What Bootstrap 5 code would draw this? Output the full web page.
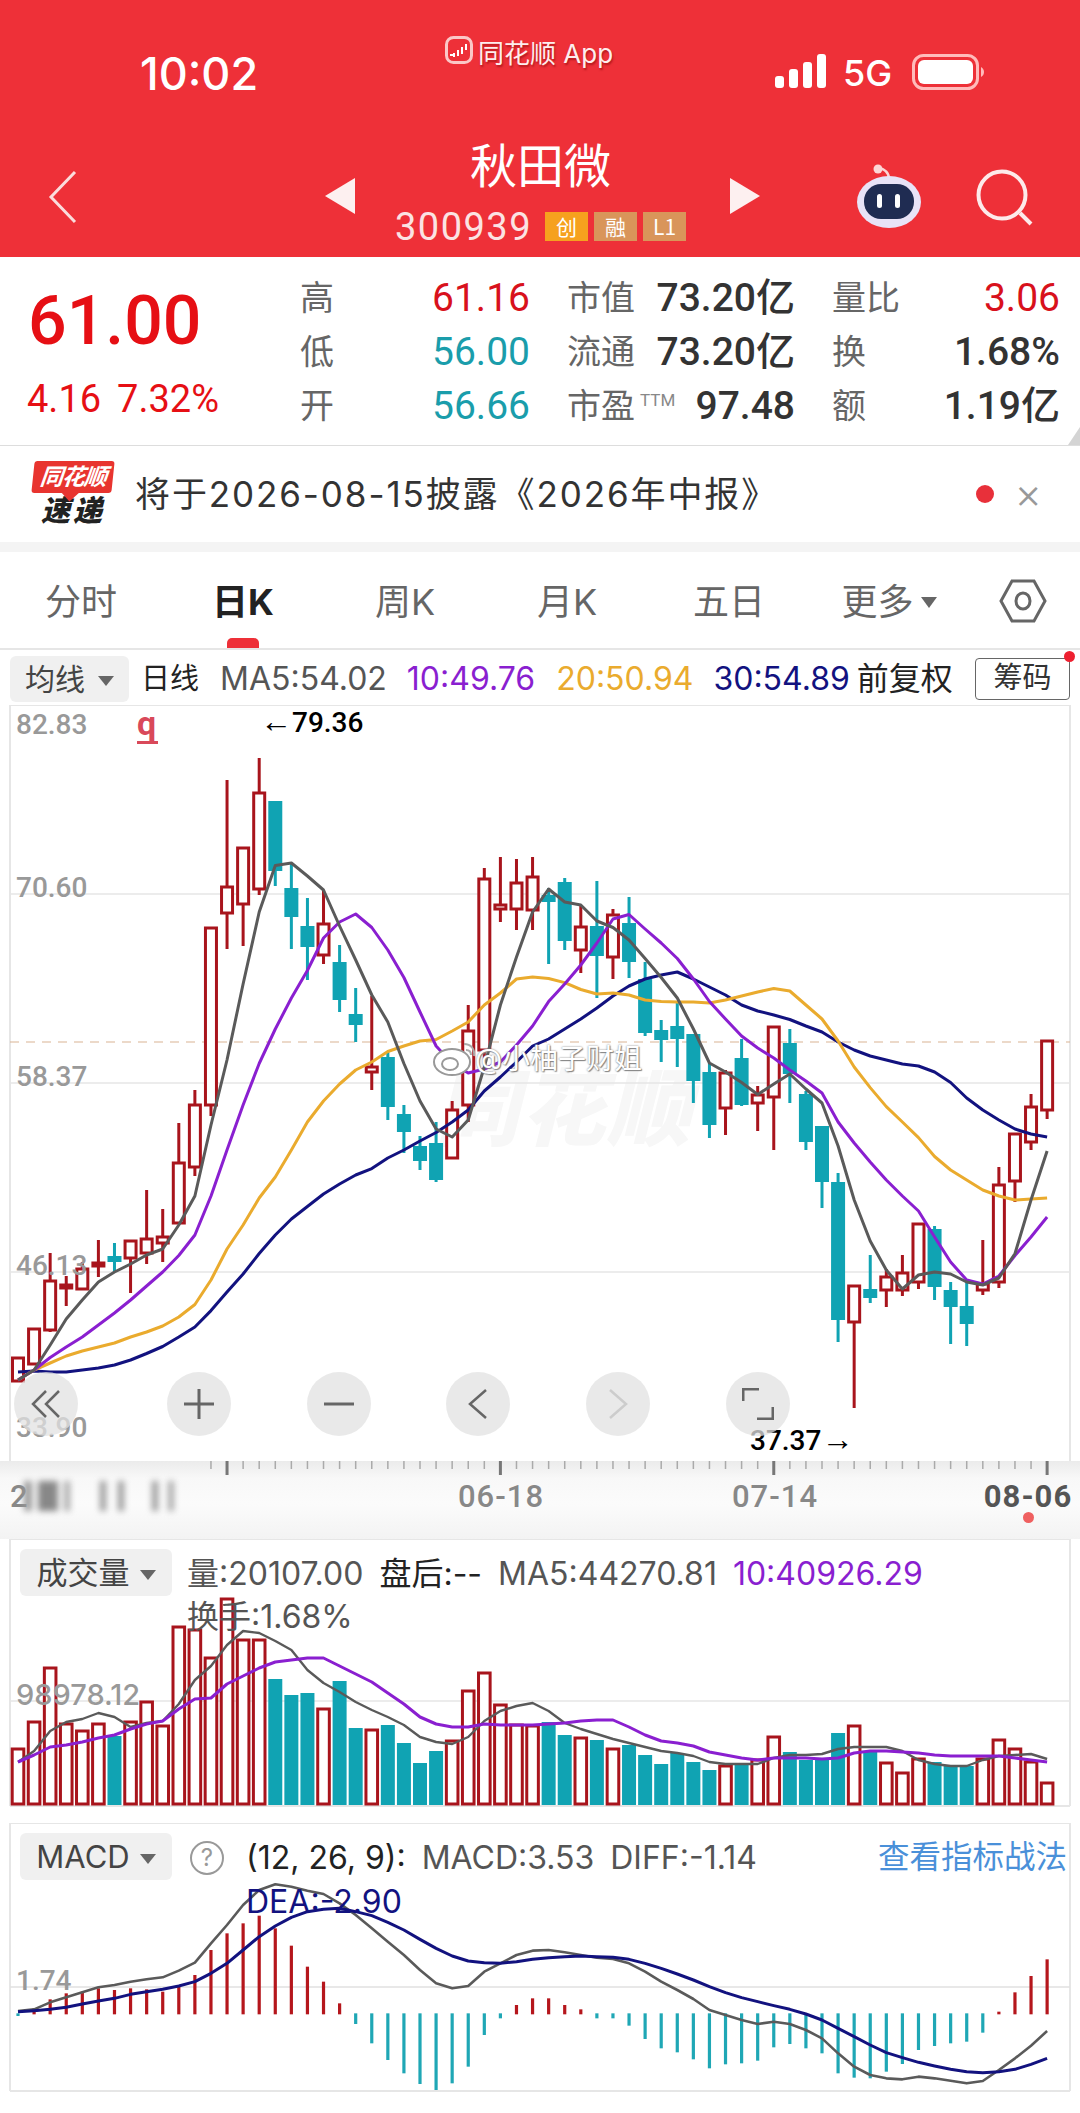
<!DOCTYPE html>
<html lang="zh-CN">
<head>
  <meta charset="UTF-8" />
  <meta name="viewport" content="width=device-width, initial-scale=1.0"/>
  <title>秋田微 300939</title>
  <link href="https://cdn.jsdelivr.net/npm/bootstrap@5.3.3/dist/css/bootstrap.min.css" rel="stylesheet">
  <style>
    body {
      background: #fff;
      font-family: Inter, "Noto Sans CJK SC", sans-serif;
      color: #333;
      width: 1080px;
      overflow-x: hidden;
    }
    /* red header */
    .top-red { background: #ee3038; height: 257px; color: #fff; }
    .status-row { height: 130px; }
    .clock { width: 445px; padding: 51px 0 0 140px; font-size: 45px; font-weight: 500; line-height: 46px; }
    .app-tag { width: 330px; padding-top: 36px; font-size: 26px; line-height: 36px; color: #fdeeee; text-shadow: 1px 2px 2px rgba(120,0,0,.5); }
    .app-logo { width: 28px; height: 28px; margin-right: 5px; }
    .sys-icons { padding-top: 54px; }
    .five-g { font-size: 36px; line-height: 38px; margin: 0 20px 0 16px; font-weight: 500; }
    .nav-row { height: 127px; }
    .back-zone { width: 325px; padding: 40px 0 0 48px; }
    .stock-mid { width: 375px; padding-right: 4px; }
    .stock-name { font-size: 47px; line-height: 56px; margin-top: 8px; }
    .stock-code { font-size: 38px; line-height: 40px; margin-top: 13px; letter-spacing: 1.5px; font-family: Roboto, sans-serif; color: #fbe3e3; }
    .tagm { display: inline-block; width: 43px; height: 29px; line-height: 29px; background: #d9955a; color: #fff; font-size: 21px; text-align: center; margin-left: 6px; letter-spacing: 0; font-family: "Noto Sans CJK SC", sans-serif; vertical-align: 5px; }
    .tagm-a { background: #f6a11e; margin-left: 13px; }
    .arrow-l, .arrow-r { margin-top: 48px; width: 30px; height: 36px; }
    .right-zone { padding: 34px 0 0 96px; }
    .robot { width: 66px; height: 64px; margin-right: 54px; }
    .zoom-glass { width: 58px; height: 58px; margin-top: 5px; }

    /* quote */
    .quote-box { height: 189px; border-bottom: 1px solid #ddd; font-family: Roboto, "Noto Sans CJK SC", sans-serif; }
    .quote-corner { right: 0; bottom: 0; border-left: 12px solid transparent; border-bottom: 18px solid #d4d4d4; width: 0; height: 0; }
    .price-col { width: 300px; padding-left: 28px; color: #e60f14; }
    .price-big { font-size: 68px; font-weight: 500; line-height: 80px; margin-top: 24px; }
    .price-chg { font-size: 38px; line-height: 40px; margin-top: 18px; white-space: nowrap; margin-left: -1px; }
    .price-chg span + span { margin-left: 16px; }
    .q-col { padding-top: 14px; font-size: 39px; }
    .q-a { width: 230px; margin-right: 37px; }
    .q-b { width: 228px; margin-right: 37px; }
    .q-c { width: 228px; }
    .q-line { height: 54px; line-height: 54px; white-space: nowrap; }
    .q-lab { font-size: 34px; color: #666; }
    .q-ttm { font-size: 17px; position: relative; top: -12px; margin-left: 5px; color: #888; }
    .v-red { color: #d8111c; }
    .v-teal { color: #1a9dab; }
    .v-dark { color: #333; font-weight: 500; }

    /* notice */
    .notice-box { height: 106px; padding: 15px 38px 0 33px; border-bottom: 10px solid #f4f4f4; }
    .ad-logo { width: 80px; height: 68px; margin-right: 22px; }
    .ad-top { background: #e8342f; color: #fff; font-size: 23px; line-height: 32px; font-weight: 700; font-style: italic; text-align: center; border-radius: 3px; transform: skewX(-6deg); letter-spacing: -1px; position: relative; }
    .ad-top::after { content: ""; position: absolute; left: 33px; bottom: -6px; width: 12px; height: 12px; background: #e8342f; transform: rotate(45deg); z-index: -1; }
    .ad-bot { font-size: 29px; line-height: 35px; font-weight: 900; font-style: italic; text-align: center; color: #222; letter-spacing: 3px; }
    .notice-text { font-size: 35px; line-height: 66px; color: #333; white-space: nowrap; letter-spacing: 1.9px; }
    .notice-dot { width: 18px; height: 18px; border-radius: 50%; background: #e8303a; margin: 24px 21px 0 auto; }
    .notice-x { font-size: 42px; line-height: 64px; color: #999; font-weight: 300; }

    /* tabs */
    .tab-row { height: 98px; border-bottom: 2px solid #e6e6e6; font-size: 36px; color: #666; }
    .tab-cell { width: 162px; text-align: center; line-height: 100px; white-space: nowrap; }
    .tab-on { color: #222; font-weight: 700; }
    .tab-on::after { content: ""; position: absolute; left: 65px; bottom: 0; width: 32px; height: 10px; border-radius: 5px 5px 0 0; background: #ee3038; }
    .tab-more { padding-right: 4px; }
    .tab-tri { display: inline-block; width: 0; height: 0; border-left: 8px solid transparent; border-right: 8px solid transparent; border-top: 11px solid #666; vertical-align: 7px; margin-left: 7px; }
    .tab-gear { width: 108px; padding: 19px 0 0 27px; }

    /* legend row above candles */
    .legend-row { height: 55px; padding: 3px 10px 0 10px; font-size: 32px; white-space: nowrap; }
    .drop-btn { background: #f0f0f0; border-radius: 6px; height: 46px; line-height: 46px; padding: 0 15px; color: #444; font-size: 30px; }
    .drop-btn i { display: inline-block; width: 0; height: 0; border-left: 8px solid transparent; border-right: 8px solid transparent; border-top: 10px solid #666; margin-left: 13px; vertical-align: 4px; }
    .c-ma5 { color: #555; }
    .c-ma10 { color: #8a1fd0; }
    .c-ma20 { color: #eaab2e; }
    .c-ma30 { color: #12127f; }
    .c-blk { color: #222; }
    .chip-btn { border: 1.5px solid #666; border-radius: 4px; width: 95px; height: 42px; line-height: 38px; text-align: center; margin-left: auto; color: #333; font-size: 29px; }
    .chip-dot { right: 5px; top: 1px; width: 11px; height: 11px; border-radius: 50%; background: #ee2030; }
    .leg-1 { margin-left: 12px; font-size: 29px; }
    .leg-2 { margin-left: 21px; }
    .leg-3 { margin-left: 20px; }
    .leg-4 { margin-left: 21px; }
    .leg-5 { margin-left: 20px; }
    .leg-6 { margin-left: 7px; }

    /* chart panels */
    .chart-box { height: 756px; }
    .over { position: absolute; white-space: nowrap; }
    .panel-svg { display: block; position: absolute; left: 0; top: 0; }
    .scale-lab { left: 16px; font-size: 28px; line-height: 34px; color: #999; font-family: Roboto, sans-serif; font-weight: 500; }
    .sc-1 { top: 3px; }
    .sc-2 { top: 166px; }
    .sc-3 { top: 355px; }
    .sc-4 { top: 544px; }
    .sc-5 { top: 706px; }
    .hi-lab { left: 260px; top: 0; font-size: 28px; line-height: 36px; color: #000; font-family: Roboto, sans-serif; font-weight: 500; }
    .lo-lab { left: 750px; top: 718px; font-size: 28px; line-height: 36px; color: #000; font-family: Roboto, sans-serif; font-weight: 500; }
    .thin-arrow { font-family: "Liberation Sans", sans-serif; font-weight: 400; font-size: 32px; line-height: 0; }
    .q-mark { left: 137px; top: 4px; color: #d9495a; font-size: 34px; line-height: 28px; font-weight: 700; font-family: Roboto, sans-serif; }
    .q-arrow { display: block; width: 21px; height: 3px; background: #d9495a; margin-top: 4px; }
    .wm-big { left: 435px; top: 366px; font-size: 84px; line-height: 76px; font-weight: 900; font-style: italic; color: #f7f7f7; letter-spacing: 2px; }
    .wm-name { left: 475px; top: 342px; font-size: 28px; line-height: 24px; color: #fff; text-shadow: 0 0 2px #777, 1px 1px 1px #888; }
    .wm-bird { left: 432px; top: 333px; width: 50px; height: 40px; }
    .round-btn { top: 667px; width: 64px; height: 64px; border-radius: 50%; background: rgba(225,225,225,.75); padding: 0; border: 0; }
    .round-btn svg { display: block; margin: 16px; }
    .rb-1 { left: 14px; }
    .rb-2 { left: 167px; }
    .rb-3 { left: 307px; }
    .rb-4 { left: 446px; }
    .rb-5 { left: 586px; }
    .rb-6 { left: 726px; }

    /* date axis */
    .date-band { height: 78px; background: linear-gradient(#ebebeb, #f8f8f8 22%, #fbfbfb 55%, #f3f3f3); font-family: Roboto, sans-serif; font-weight: 500; font-size: 31px; color: #888; }
    .date-lab { top: 18px; line-height: 36px; letter-spacing: 1px; transform: translateX(-50%); }
    .d-1 { left: 501px; }
    .d-2 { left: 775px; }
    .d-3 { left: 1028px; color: #555; font-weight: 700; }
    .date-dot { left: 1023px; top: 51px; width: 11px; height: 11px; border-radius: 50%; background: #ef6060; }
    .blur-left { left: 10px; top: 18px; width: 170px; height: 36px; color: #888; line-height: 36px; overflow: hidden; }
    .blur-bars { left: 24px; top: 20px; width: 160px; height: 30px; filter: blur(3px);
      background: linear-gradient(90deg, #999 0 8px, transparent 8px 14px, #888 14px 34px, transparent 34px 40px, #aaa 40px 46px, transparent 46px 76px, #999 76px 82px, transparent 82px 94px, #999 94px 100px, transparent 100px 128px, #999 128px 134px, transparent 134px 144px, #aaa 144px 150px, transparent 150px); }

    /* lower panels */
    .vol-box, .macd-box { height: 270px; }
    .macd-box { margin-top: 14px; }
    .sub-btn { left: 20px; top: 10px; width: 152px; height: 47px; line-height: 47px; background: #f0f0f0; border-radius: 6px; text-align: center; font-size: 31px; color: #444; }
    .sub-btn i { display: inline-block; width: 0; height: 0; border-left: 8px solid transparent; border-right: 8px solid transparent; border-top: 10px solid #666; margin-left: 10px; vertical-align: 4px; }
    .vol-leg { left: 187px; top: 16px; font-size: 32px; line-height: 38px; color: #555; }
    .vol-leg span { margin-right: 16px; }
    .vol-turn { left: 187px; top: 60px; font-size: 32px; line-height: 36px; color: #555; }
    .vol-scale { left: 16px; top: 139px; font-size: 29px; line-height: 34px; color: #999; font-weight: 500; font-family: Inter, sans-serif; }
    .macd-q { left: 190px; top: 18px; width: 34px; height: 34px; border: 2px solid #999; border-radius: 50%; text-align: center; line-height: 30px; font-size: 24px; color: #999; }
    .macd-leg { left: 246px; top: 16px; font-size: 32px; line-height: 38px; color: #555; }
    .macd-leg span { margin-right: 16px; }
    .macd-link { right: 13px; top: 14px; font-size: 31.5px; line-height: 40px; color: #4a90d9; }
    .macd-dea { left: 246px; top: 61px; font-size: 32px; line-height: 36px; color: #12127f; }
    .macd-scale { left: 16px; top: 141px; font-size: 28px; line-height: 34px; color: #999; font-family: Roboto, sans-serif; font-weight: 500; }
  </style>
</head>
<body class="m-0">

  <!-- red header -->
  <div class="top-red">
    <div class="status-row d-flex">
      <div class="clock">10:02</div>
      <div class="app-tag d-flex align-items-start">
        <svg class="app-logo" viewBox="0 0 28 28"><rect x="1.5" y="1.5" width="25" height="25" rx="7" fill="#ee3038" stroke="#fbc7c7" stroke-width="3"/><path d="M5 19h4M9 17v4M13 14v6M17 11v7M21 8v6" stroke="#fff" stroke-width="2"/></svg>
        <span>同花顺 App</span>
      </div>
      <div class="sys-icons d-flex align-items-start">
        <svg width="52" height="34" viewBox="0 0 52 34"><rect x="0" y="22" width="9" height="12" rx="3" fill="#fff"/><rect x="14" y="15" width="9" height="19" rx="3" fill="#fff"/><rect x="28" y="8" width="9" height="26" rx="3" fill="#fff"/><rect x="42" y="0" width="9" height="34" rx="3" fill="#fff"/></svg>
        <div class="five-g">5G</div>
        <svg width="72" height="36" viewBox="0 0 72 36"><rect x="1.5" y="1.5" width="64" height="33" rx="10" fill="none" stroke="#fbb" stroke-width="3"/><rect x="6" y="6" width="55" height="24" rx="6" fill="#fff"/><path d="M69 13c2 1 3 3 3 5s-1 4-3 5z" fill="#fbb"/></svg>
      </div>
    </div>
    <div class="nav-row d-flex">
      <div class="back-zone">
        <svg width="30" height="54" viewBox="0 0 30 54"><path d="M27 2 3 27l24 25" fill="none" stroke="#fbdcdc" stroke-width="3"/></svg>
      </div>
      <svg class="arrow-l" viewBox="0 0 30 36"><path d="M30 0v36L0 18z" fill="#fdf0f0"/></svg>
      <div class="stock-mid text-center">
        <div class="stock-name">秋田微</div>
        <div class="stock-code">300939<span class="tagm tagm-a">创</span><span class="tagm">融</span><span class="tagm">L1</span></div>
      </div>
      <svg class="arrow-r" viewBox="0 0 30 36"><path d="M0 0v36l30-18z" fill="#fdf0f0"/></svg>
      <div class="right-zone d-flex align-items-start">
        <svg class="robot" viewBox="0 0 66 64"><path d="M33 15c0-6-4-10-10-11" fill="none" stroke="#fbd5d5" stroke-width="2.5"/><circle cx="22" cy="5" r="4.5" fill="#fcd6d6"/><ellipse cx="33" cy="38" rx="32" ry="26" fill="#e8e3f7"/><rect x="8" y="20" width="50" height="35" rx="17" fill="#1f2c52"/><rect x="21" y="30" width="5" height="14" rx="2.5" fill="#fff"/><rect x="39" y="30" width="5" height="14" rx="2.5" fill="#fff"/></svg>
        <svg class="zoom-glass" viewBox="0 0 58 58"><circle cx="26" cy="26" r="23.5" fill="none" stroke="#fdeaea" stroke-width="4"/><path d="M44 44l11 11" stroke="#fdeaea" stroke-width="4"/></svg>
      </div>
    </div>
  </div>

  <!-- quote -->
  <div class="quote-box d-flex position-relative">
    <div class="price-col">
      <div class="price-big">61.00</div>
      <div class="price-chg"><span>4.16</span><span>7.32%</span></div>
    </div>
    <div class="q-col q-a">
      <div class="q-line d-flex justify-content-between"><span class="q-lab">高</span><span class="v-red">61.16</span></div>
      <div class="q-line d-flex justify-content-between"><span class="q-lab">低</span><span class="v-teal">56.00</span></div>
      <div class="q-line d-flex justify-content-between"><span class="q-lab">开</span><span class="v-teal">56.66</span></div>
    </div>
    <div class="q-col q-b">
      <div class="q-line d-flex justify-content-between"><span class="q-lab">市值</span><span class="v-dark">73.20亿</span></div>
      <div class="q-line d-flex justify-content-between"><span class="q-lab">流通</span><span class="v-dark">73.20亿</span></div>
      <div class="q-line d-flex justify-content-between"><span class="q-lab">市盈<span class="q-ttm">TTM</span></span><span class="v-dark">97.48</span></div>
    </div>
    <div class="q-col q-c">
      <div class="q-line d-flex justify-content-between"><span class="q-lab">量比</span><span class="v-red">3.06</span></div>
      <div class="q-line d-flex justify-content-between"><span class="q-lab">换</span><span class="v-dark">1.68%</span></div>
      <div class="q-line d-flex justify-content-between"><span class="q-lab">额</span><span class="v-dark">1.19亿</span></div>
    </div>
    <div class="quote-corner position-absolute"></div>
  </div>

  <!-- notice -->
  <div class="notice-box d-flex">
    <div class="ad-logo">
      <div class="ad-top">同花顺</div>
      <div class="ad-bot">速递</div>
    </div>
    <div class="notice-text">将于2026-08-15披露《2026年中报》</div>
    <div class="notice-dot"></div>
    <div class="notice-x">×</div>
  </div>

  <!-- tabs -->
  <div class="tab-row d-flex">
    <div class="tab-cell">分时</div>
    <div class="tab-cell tab-on position-relative">日K</div>
    <div class="tab-cell">周K</div>
    <div class="tab-cell">月K</div>
    <div class="tab-cell">五日</div>
    <div class="tab-cell tab-more">更多<span class="tab-tri"></span></div>
    <div class="tab-gear">
      <svg width="48" height="44" viewBox="0 0 48 44"><path d="M13 2h22l11 20-11 20H13L2 22z" fill="none" stroke="#666" stroke-width="3"/><ellipse cx="24" cy="22" rx="7" ry="8" fill="none" stroke="#666" stroke-width="3"/></svg>
    </div>
  </div>

  <!-- legend -->
  <div class="legend-row d-flex align-items-center position-relative">
    <div class="drop-btn">均线<i></i></div>
    <span class="c-blk leg-1">日线</span>
    <span class="c-ma5 leg-2">MA5:54.02</span>
    <span class="c-ma10 leg-3">10:49.76</span>
    <span class="c-ma20 leg-4">20:50.94</span>
    <span class="c-ma30 leg-5">30:54.89</span>
    <span class="c-blk leg-6">前复权</span>
    <div class="chip-btn">筹码</div>
    <div class="chip-dot position-absolute"></div>
  </div>

  <!-- candles -->
  <div class="chart-box position-relative">
    <span class="over wm-big">同花顺</span>
    <svg id="priceSvg" class="panel-svg" width="1080" height="756" viewBox="0 705 1080 756"></svg>
    <span class="over scale-lab sc-1">82.83</span>
    <span class="over scale-lab sc-2">70.60</span>
    <span class="over scale-lab sc-3">58.37</span>
    <span class="over scale-lab sc-4">46.13</span>
    <span class="over scale-lab sc-5">33.90</span>
    <span class="over q-mark">q<i class="q-arrow"></i></span>
    <span class="over hi-lab"><span class="thin-arrow">←</span>79.36</span>
    <span class="over lo-lab">37.37<span class="thin-arrow">→</span></span>
    <svg class="over wm-bird" viewBox="0 0 50 40"><ellipse cx="20" cy="24" rx="18" ry="13" fill="#fff" stroke="#999" stroke-width="2"/><ellipse cx="18" cy="26" rx="8" ry="6" fill="none" stroke="#999" stroke-width="2"/><path d="M32 6c7 0 11 5 10 12M34 12c3 0 5 2 5 5" fill="none" stroke="#aaa" stroke-width="2"/></svg>
    <span class="over wm-name">@小柚子财姐</span>
    <button class="over round-btn rb-1" type="button"><svg width="32" height="32" viewBox="0 0 32 32"><path d="M16 3 3 16l13 13M29 3 16 16l13 13" fill="none" stroke="#666" stroke-width="2.5"/></svg></button>
    <button class="over round-btn rb-2" type="button"><svg width="32" height="32" viewBox="0 0 32 32"><path d="M1 16h30M16 1v30" fill="none" stroke="#666" stroke-width="3"/></svg></button>
    <button class="over round-btn rb-3" type="button"><svg width="32" height="32" viewBox="0 0 32 32"><path d="M1 16h30" fill="none" stroke="#666" stroke-width="3"/></svg></button>
    <button class="over round-btn rb-4" type="button"><svg width="32" height="32" viewBox="0 0 32 32"><path d="M24 2 8 16l16 14" fill="none" stroke="#666" stroke-width="2.5"/></svg></button>
    <button class="over round-btn rb-5" type="button"><svg width="32" height="32" viewBox="0 0 32 32"><path d="M8 2l16 14L8 30" fill="none" stroke="#ccc" stroke-width="2.5"/></svg></button>
    <button class="over round-btn rb-6" type="button"><svg width="32" height="32" viewBox="0 0 32 32"><path d="M1 13V1h16M31 19v12H15" fill="none" stroke="#666" stroke-width="3"/></svg></button>
  </div>

  <!-- date axis -->
  <div class="date-band position-relative">
    <svg id="tickSvg" class="panel-svg" width="1080" height="20"></svg>
    <div class="over blur-left">2</div>
    <div class="over blur-bars"></div>
    <span class="over date-lab d-1">06-18</span>
    <span class="over date-lab d-2">07-14</span>
    <span class="over date-lab d-3">08-06</span>
    <span class="over date-dot"></span>
  </div>

  <!-- volume -->
  <div class="vol-box position-relative">
    <svg id="volSvg" class="panel-svg" width="1080" height="270" viewBox="0 1539 1080 270"></svg>
    <div class="over sub-btn">成交量<i></i></div>
    <div class="over vol-leg"><span>量:20107.00</span><span class="c-blk">盘后:--</span><span>MA5:44270.81</span><span class="c-ma10">10:40926.29</span></div>
    <div class="over vol-turn">换手:1.68%</div>
    <span class="over vol-scale">98978.12</span>
  </div>

  <!-- macd -->
  <div class="macd-box position-relative">
    <svg id="macdSvg" class="panel-svg" width="1080" height="270" viewBox="0 1823 1080 270"></svg>
    <div class="over sub-btn">MACD<i></i></div>
    <div class="over macd-q">?</div>
    <div class="over macd-leg"><span class="c-blk">(12, 26, 9):</span><span>MACD:3.53</span><span>DIFF:-1.14</span></div>
    <div class="over macd-link">查看指标战法</div>
    <div class="over macd-dea">DEA:-2.90</div>
    <span class="over macd-scale">1.74</span>
  </div>

  <script src="https://cdn.jsdelivr.net/npm/bootstrap@5.3.3/dist/js/bootstrap.bundle.min.js"></script>
  <script>
    const RED = '#a8141c', TEAL = '#10a3b3';
    const X = i => 18 + 16.08 * i;

    // wickTop, bodyTop, bodyBottom, wickBottom, colour (page pixels)
    const candles = [
      [1358,1358,1381,1381,'r'],[1329,1329,1364,1364,'r'],[1253,1281,1330,1332,'r'],[1276,1285,1288,1306,'r'],[1262,1269,1289,1289,'r'],
      [1240,1263,1266,1277,'r'],[1243,1256,1262,1272,'t'],[1241,1241,1258,1293,'r'],[1190,1239,1253,1264,'r'],[1209,1237,1243,1262,'r'],
      [1123,1163,1223,1223,'r'],[1090,1105,1167,1176,'r'],[928,928,1105,1116,'r'],[780,887,913,949,'r'],[848,848,904,946,'r'],
      [758,793,889,895,'r'],[801,801,871,886,'t'],[864,888,917,949,'t'],[898,926,947,980,'t'],[890,924,955,964,'r'],
      [945,962,1000,1012,'t'],[988,1014,1025,1042,'t'],[996,1067,1072,1090,'r'],[1051,1057,1107,1120,'t'],[1105,1114,1132,1153,'t'],
      [1136,1146,1161,1170,'t'],[1122,1143,1180,1182,'t'],[1101,1110,1158,1158,'r'],[1005,1031,1105,1122,'r'],[868,879,1050,1060,'r'],
      [857,905,909,922,'r'],[859,883,909,930,'r'],[857,877,910,930,'r'],[888,895,902,964,'t'],[878,882,941,950,'t'],
      [905,927,950,973,'r'],[881,926,956,998,'t'],[909,915,957,979,'r'],[897,923,962,978,'t'],[962,979,1033,1036,'t'],
      [1020,1030,1040,1062,'t'],[1003,1026,1039,1067,'t'],[1034,1034,1081,1103,'t'],[1063,1072,1125,1138,'t'],[1070,1073,1108,1135,'r'],
      [1039,1058,1105,1106,'t'],[1086,1095,1103,1131,'r'],[1027,1027,1097,1150,'r'],[1029,1043,1074,1103,'t'],[1091,1094,1142,1150,'t'],
      [1126,1126,1182,1208,'t'],[1173,1182,1320,1342,'t'],[1286,1286,1322,1408,'r'],[1255,1289,1298,1303,'t'],[1269,1277,1290,1307,'r'],
      [1255,1273,1290,1296,'r'],[1223,1224,1282,1289,'r'],[1226,1229,1287,1300,'t'],[1282,1290,1307,1344,'t'],[1282,1306,1324,1346,'t'],
      [1240,1284,1290,1295,'r'],[1167,1185,1282,1288,'r'],[1134,1134,1181,1202,'r'],[1094,1107,1142,1150,'r'],[1040,1041,1110,1119,'r']
    ];
    const ma5 = [1380,1370,1345,1319,1300,1282,1272,1264,1255,1249,1225,1196,1125,1060,984,912,865.5,863,876,890,926,960,995,1022,1063.5,1101,1129,1137,1120,1067,1005,957,912,889,902,905,921,927.5,940,958.5,977.5,998,1029,1063,1072,1082.5,1094.5,1084,1074,1089,1103,1146,1200,1241,1270,1289,1275,1272,1274,1282,1285,1278,1253.5,1200,1151];
    const ma10 = [1380,1370,1357.5,1347,1337,1325,1313,1300,1286,1272,1255.5,1235,1196,1150,1105,1063.5,1029,998,970.5,938,922,914,927.5,950,977.5,1012,1046,1063.5,1073,1069,1062,1045,1026,1001.6,984,965,943,919,914.5,929,943,958.5,979,1001.5,1019,1036,1048,1058,1070,1081,1093,1122,1143,1162,1180,1196,1211,1237,1262,1280,1284,1276,1255.5,1237,1217];
    const ma20 = [1380,1370,1363,1356,1351,1347,1343,1337,1332,1326,1317,1304.5,1280,1249,1225,1198,1177,1150,1122,1101,1084,1070,1062,1051.5,1046,1041,1039.5,1031,1022,1005,993,979,977,978.5,982.6,989.5,994,993,995,1000,1001.6,1002,1002,1003,1000,996,992,988.5,991,1005,1019,1041,1067,1087.6,1106.6,1122,1137.6,1156.5,1170,1180,1190,1196,1200,1199,1198];
    const ma30 = [1372,1371,1372,1372,1370,1368,1365,1360,1353.5,1346.5,1337,1327,1310.6,1292,1274,1253.5,1235,1219,1206.5,1194,1184,1175,1168.6,1158,1150,1141,1132.5,1122,1110,1091,1077,1062,1046,1039,1029,1019,1008,996,986,979,975,972,979,987,995,1005,1011,1015,1019.5,1026,1032,1042,1050,1056,1060,1064,1066,1072,1082.5,1098,1110,1120,1129,1134,1137];

    const vols = [1749,1722,1668,1724,1731,1724,1736,1722,1702,1726,1627,1630,1658,1599,1640,1640,1679,1695,1693,1709,1681,1728,1730,1725,1743,1763,1751,1741,1691,1673,1705,1725,1726,1722,1735,1738,1740,1749,1745,1755,1764,1753,1762,1770,1766,1764,1760,1737,1752,1760,1760,1733,1726,1752,1763,1773,1759,1762,1766,1766,1759,1740,1749,1762,1783];
    const volMa5 = [1762,1751,1731,1722,1719,1713,1717,1727,1723,1721,1704,1680,1666,1645,1631,1633,1641,1650,1670,1683,1692,1702,1710,1717,1725,1737,1742,1744,1737,1721,1711,1706,1703,1711,1723,1729,1734,1739,1743,1747,1751,1753,1756,1762,1764,1764,1764,1758,1755,1755,1754,1749,1747,1747,1747,1751,1760,1764,1766,1766,1760,1756,1755,1754,1759];
    const volMa10 = [1762,1755,1747,1745,1742,1738,1735,1729,1724,1721,1709,1699,1698,1684,1676,1668,1662,1660,1658,1658,1666,1674,1682,1693,1704,1717,1724,1727,1727,1724,1725,1725,1725,1724,1723,1721,1720,1720,1727,1735,1741,1743,1746,1752,1755,1758,1760,1758,1758,1758,1759,1758,1753,1751,1751,1752,1753,1755,1756,1756,1756,1756,1758,1760,1762];

    // macd values read off the panel: bar tips and both lines, in panel units (3 = 1px)
    const macdBars = [648,625,598,580,575,565,570,565,568,575,555,525,450,400,370,347,385,437,500,545,610,672,730,780,820,852,870,850,800,705,655,615,595,595,615,628,655,655,677,717,745,757,778,805,793,790,782,742,732,745,760,820,833,835,815,792,750,738,730,725,698,635,577,528,478];
    const diff = [633,628,607,592,577,562,555,545,538,532,512,488,430,375,315,270,253,260,272,282,310,345,385,425,465,510,550,565,558,515,490,465,452,450,457,465,473,477,490,515,545,570,597,630,645,660,672,665,672,690,715,760,800,825,835,838,830,835,842,850,843,810,775,737,693];
    const dea = [635,632,628,622,612,603,595,583,575,568,558,545,520,490,450,410,378,352,335,328,325,335,347,367,390,418,445,468,483,488,490,485,478,473,470,468,470,472,478,490,505,522,540,560,578,593,605,617,628,642,660,685,710,735,758,773,787,798,808,815,818,815,808,793,775];

    const line = (ys, color, w) =>
      `<polyline fill="none" stroke="${color}" stroke-width="${w}" stroke-linejoin="round" points="${ys.map((y, i) => X(i).toFixed(1) + ',' + y).join(' ')}"/>`;

    // price panel
    let s = '';
    s += '<path d="M10 705V1461M1070 705V1461M10 705H1070" stroke="#e6e6e6" stroke-width="2" fill="none"/>';
    [894, 1083, 1272].forEach(y => { s += `<path d="M10 ${y}H1070" stroke="#e6e6e6" stroke-width="1.5"/>`; });
    s += '<path d="M10 1042H1070" stroke="#d9b394" stroke-width="1.2" stroke-dasharray="9 7"/>';
    candles.forEach((c, i) => {
      const x = X(i), col = c[4] === 'r' ? RED : TEAL;
      s += `<path d="M${x} ${c[0]}V${c[1]}M${x} ${c[2]}V${c[3]}" stroke="${col}" stroke-width="3"/>`;
      if (c[4] === 'r') s += `<rect x="${x - 5.5}" y="${c[1]}" width="11" height="${c[2] - c[1]}" fill="#fff" stroke="${col}" stroke-width="3"/>`;
      else s += `<rect x="${x - 7}" y="${c[1]}" width="14" height="${c[2] - c[1]}" fill="${col}"/>`;
    });
    s += line(ma30, '#12127f', 3) + line(ma20, '#eaab2e', 3) + line(ma10, '#8a1fd0', 3) + line(ma5, '#5a5a5a', 3);
    document.getElementById('priceSvg').innerHTML = s;

    // ticks under the price panel
    let t = '';
    for (let i = 12; i < 65; i++) {
      const big = (i - 13) % 17 === 0;
      t += `<rect x="${X(i) - (big ? 1.5 : .75)}" y="0" width="${big ? 3 : 1.5}" height="${big ? 14 : 8}" fill="${big ? '#777' : '#aaa'}"/>`;
    }
    document.getElementById('tickSvg').innerHTML = t;

    // volume panel
    let v = '';
    v += '<path d="M10 1539V1806M1070 1539V1806M10 1539H1070M10 1806H1070" stroke="#e6e6e6" stroke-width="2" fill="none"/>';
    v += '<path d="M10 1701H1070" stroke="#e6e6e6" stroke-width="1.5"/>';
    vols.forEach((top, i) => {
      const x = X(i), bottom = 1804;
      if (candles[i][4] === 'r') v += `<rect x="${x - 5.8}" y="${top}" width="11.6" height="${bottom - top}" fill="#fff" stroke="${RED}" stroke-width="3"/>`;
      else v += `<rect x="${x - 7}" y="${top}" width="14" height="${bottom - top + 1}" fill="${TEAL}"/>`;
    });
    v += line(volMa5, '#5a5a5a', 2.4) + line(volMa10, '#8a1fd0', 3);
    document.getElementById('volSvg').innerHTML = v;

    // macd panel
    const mY = z => 1800 + z / 3;
    let m = '';
    m += '<path d="M10 1823V2091M1070 1823V2091M10 1823H1070M10 2091H1070" stroke="#e6e6e6" stroke-width="2" fill="none"/>';
    m += '<path d="M10 1987H1070" stroke="#e0e0e0" stroke-width="1.5"/>';
    macdBars.forEach((z, i) => {
      const red = z < 640;
      m += `<path d="M${X(i)} ${mY(red ? 643 : 640)}V${mY(z)}" stroke="${red ? '#b5161c' : '#1fa7b5'}" stroke-width="3.2"/>`;
    });
    m += line(diff.map(mY), '#5a5a5a', 2.6) + line(dea.map(mY), '#12127f', 3);
    document.getElementById('macdSvg').innerHTML = m;
  </script>
</body>
</html>
